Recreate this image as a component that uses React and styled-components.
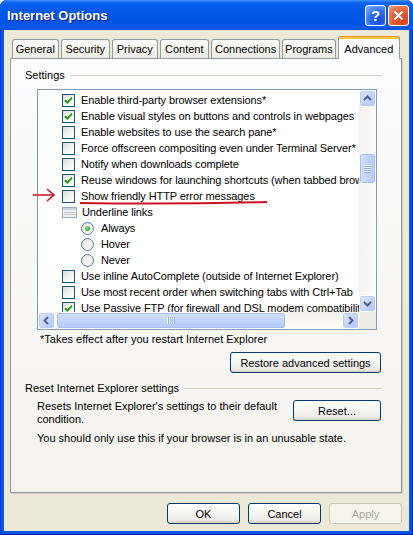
import React from 'react';
import styled, { createGlobalStyle } from 'styled-components';

const GlobalStyle = createGlobalStyle`
  html, body { margin: 0; padding: 0; background: #fff; }
  body {
    font-family: Tahoma, "Liberation Sans", Arial, sans-serif;
    font-size: 11px;
    color: #000;
  }
  * { box-sizing: border-box; }
`;

const Window = styled.div`
  position: relative;
  width: 413px;
  height: 535px;
  display: flex;
  flex-direction: column;
  background: #0855e6;
  border-radius: 7px 7px 0 0;
  box-shadow: inset 1px 0 0 #0831d9, inset -1px 0 0 #001ea0, inset 0 -1px 0 #001ea0;
  overflow: hidden;
`;

const TitleBar = styled.div`
  height: 30px;
  flex: none;
  display: flex;
  align-items: center;
  padding: 0 4px 0 7px;
  background: linear-gradient(180deg, #3d8fff 0px, #0a60ee 3px, #0458e8 12px, #0054e3 24px, #0a5ce8 28px, #0048d8 30px);
`;

const Caption = styled.div`
  flex: 1;
  color: #fff;
  font-family: "Liberation Sans", Arial, sans-serif;
  font-weight: bold;
  font-size: 13px;
  text-shadow: 1px 1px 0 #0a1883;
`;

const CaptionButton = styled.div`
  width: 21px;
  height: 21px;
  margin-left: 2px;
  border: 1px solid #fff;
  border-radius: 3px;
  display: flex;
  align-items: center;
  justify-content: center;
  color: #fff;
  font-family: "Liberation Sans", Arial, sans-serif;
  font-weight: bold;
  font-size: 15px;
  background: ${p => p.$close
    ? 'radial-gradient(circle at 70% 75%, #d7411a 0%, #e25b33 45%, #f0a088 100%)'
    : 'radial-gradient(circle at 70% 75%, #1550d8 0%, #2c6cf0 45%, #8ab6ff 100%)'};
`;

const Body = styled.div`
  flex: 1;
  margin: 0 4px 4px;
  padding: 6px 7px 0 6px;
  display: flex;
  flex-direction: column;
  background: #ece9d8;
`;

const TabStrip = styled.div`
  display: flex;
  align-items: flex-end;
  height: 22px;
  padding-left: 2px;
  position: relative;
  z-index: 1;
`;

const Tab = styled.div`
  width: ${p => p.$w}px;
  height: ${p => (p.$active ? 23 : 19)}px;
  margin-right: 2px;
  margin-bottom: ${p => (p.$active ? -1 : 0)}px;
  display: flex;
  align-items: center;
  justify-content: center;
  border: 1px solid #919b9c;
  border-bottom: none;
  border-radius: 3px 3px 0 0;
  white-space: nowrap;
  background: ${p => (p.$active
    ? '#fcfcfe'
    : 'linear-gradient(180deg, #ffffff 0%, #f7f7f3 40%, #ebeae4 100%)')};
  ${p => p.$active && `
    border-top: 1px solid #e68b2c;
    box-shadow: inset 0 2px 0 #ffc73c;
    padding-top: 1px;
  `}
`;

const Panel = styled.div`
  height: 435px;
  flex: none;
  display: flex;
  flex-direction: column;
  padding: 9px 19px 0 14px;
  border: 1px solid #919b9c;
  box-shadow: 1px 1px 0 #d0cebf;
  background: linear-gradient(180deg, #fcfcfe 0%, #f4f3ee 100%);
`;

const GroupHeader = styled.div`
  display: flex;
  align-items: center;
  gap: 5px;
  height: 14px;
  margin-top: ${p => p.$top || 0}px;
  white-space: nowrap;

  &::after {
    content: '';
    flex: 1;
    height: 1px;
    background: #d0d0bf;
  }
`;

const Listbox = styled.div`
  height: 241px;
  margin: 7px 5px 0 12px;
  display: grid;
  grid-template-columns: 1fr 17px;
  grid-template-rows: 1fr 17px;
  border: 1px solid #7f9db9;
  background: #fff;
`;

const ListContent = styled.div`
  overflow: hidden;
  padding-top: 2px;
  letter-spacing: -0.1px;
`;

const Row = styled.div`
  display: flex;
  align-items: center;
  gap: ${p => p.$gap || 6}px;
  height: 16px;
  padding-left: ${p => p.$indent}px;
  white-space: nowrap;
`;

const Box = styled.div`
  width: 13px;
  height: 13px;
  flex: none;
  display: flex;
  align-items: center;
  justify-content: center;
  border: 1px solid #1c5180;
  background: linear-gradient(135deg, #dcdcd7 0%, #f4f4f0 55%, #ffffff 100%);
`;

const RadioCircle = styled.div`
  width: 13px;
  height: 13px;
  flex: none;
  display: flex;
  align-items: center;
  justify-content: center;
  border: 1px solid #5a7595;
  border-radius: 50%;
  background: linear-gradient(135deg, #dcdcd7 0%, #f4f4f0 55%, #ffffff 100%);
`;

const RadioDot = styled.div`
  width: 5px;
  height: 5px;
  border-radius: 50%;
  background: radial-gradient(circle at 40% 40%, #9ee89e 0%, #3dbb3d 50%, #21a121 100%);
`;

const VScroll = styled.div`
  display: flex;
  flex-direction: column;
  background: linear-gradient(90deg, #f3f1ec 0%, #fdfdfa 100%);
`;

const HScroll = styled.div`
  display: flex;
  background: linear-gradient(180deg, #f3f1ec 0%, #fdfdfa 100%);
`;

const Corner = styled.div`
  background: #eeede5;
`;

const ScrollButton = styled.div`
  width: 17px;
  height: 17px;
  flex: none;
  display: flex;
  align-items: center;
  justify-content: center;
  border: 1px solid #fff;
  border-radius: 3px;
  background: linear-gradient(135deg, #dde8fe 0%, #c4d5fc 50%, #b1c7f8 100%);
  box-shadow: inset 0 0 0 1px #bccdf5;
`;

const Spacer = styled.div`
  flex: 1;
`;

const Thumb = styled.div`
  flex: none;
  display: flex;
  align-items: center;
  justify-content: center;
  border: 1px solid #fff;
  border-radius: 3px;
  box-shadow: inset 0 0 0 1px #a9bff2;
  background: ${p => (p.$horizontal
    ? 'linear-gradient(180deg, #d3e0fd 0%, #c2d4fb 50%, #b5cbf9 100%)'
    : 'linear-gradient(90deg, #d3e0fd 0%, #c2d4fb 50%, #b5cbf9 100%)')};
`;

const Grip = styled.div`
  width: ${p => (p.$horizontal ? 8 : 7)}px;
  height: ${p => (p.$horizontal ? 7 : 8)}px;
  background: ${p => (p.$horizontal
    ? 'repeating-linear-gradient(90deg, #eef4ff 0 1px, #8cb0f8 1px 2px)'
    : 'repeating-linear-gradient(180deg, #eef4ff 0 1px, #8cb0f8 1px 2px)')};
`;

const Note = styled.div`
  margin: 3px 0 0 15px;
  line-height: 13px;
`;

const ButtonLine = styled.div`
  display: flex;
  justify-content: flex-end;
  margin-top: ${p => p.$top || 0}px;
  padding-right: 1px;
`;

const XPButton = styled.button`
  width: ${p => p.$w}px;
  height: 21px;
  flex: none;
  padding: 0;
  font-family: inherit;
  font-size: 11px;
  color: #000;
  border: 1px solid #003c74;
  border-radius: 3px;
  background: linear-gradient(180deg, #ffffff 0%, #f6f6f3 45%, #ecebe6 85%, #d6d0c5 100%);

  &:disabled {
    color: #aca899;
    border-color: #c9c7ba;
    background: #f5f4ea;
  }
`;

const ResetRow = styled.div`
  display: flex;
  justify-content: space-between;
  align-items: flex-start;
  margin-top: 5px;
  padding: 0 1px 0 12px;
`;

const ResetText = styled.div`
  line-height: 13px;
`;

const Warning = styled.div`
  margin: 6px 0 0 12px;
  line-height: 13px;
`;

const DialogButtons = styled.div`
  display: flex;
  justify-content: flex-end;
  gap: 8px;
  margin-top: 10px;
`;

const Annotation = styled.svg`
  position: absolute;
  left: 30px;
  top: 184px;
  pointer-events: none;
`;

const Check = () => (
  <svg width="9" height="9" viewBox="0 0 9 9">
    <path d="M1 4.2 L3.3 6.6 L8 1.8" fill="none" stroke="#21a121" strokeWidth="2" />
  </svg>
);

const Chevron = ({ dir }) => {
  const pts = {
    up: '1,6 4.5,2.5 8,6',
    down: '1,3 4.5,6.5 8,3',
    left: '6,1 2.5,4.5 6,8',
    right: '3,1 6.5,4.5 3,8',
  }[dir];
  return (
    <svg width="9" height="9" viewBox="0 0 9 9">
      <polyline points={pts} fill="none" stroke="#4d6185" strokeWidth="2" />
    </svg>
  );
};

const ListIcon = () => (
  <svg width="15" height="11" viewBox="0 0 15 11" style={{ flex: 'none' }}>
    <rect x="0.5" y="0.5" width="14" height="10" fill="#f2f2f0" stroke="#a0a8b8" />
    <rect x="1" y="1" width="13" height="2" fill="#c8d2e2" />
    <path d="M2 5.5 H13 M2 7.5 H13" stroke="#b8c0d0" />
  </svg>
);

const settings = [
  { type: 'check', on: true, label: 'Enable third-party browser extensions*' },
  { type: 'check', on: true, label: 'Enable visual styles on buttons and controls in webpages' },
  { type: 'check', on: false, label: 'Enable websites to use the search pane*' },
  { type: 'check', on: false, label: 'Force offscreen compositing even under Terminal Server*' },
  { type: 'check', on: false, label: 'Notify when downloads complete' },
  { type: 'check', on: true, label: 'Reuse windows for launching shortcuts (when tabbed browsing is off)' },
  { type: 'check', on: false, label: 'Show friendly HTTP error messages' },
  { type: 'group', label: 'Underline links' },
  { type: 'radio', on: true, label: 'Always' },
  { type: 'radio', on: false, label: 'Hover' },
  { type: 'radio', on: false, label: 'Never' },
  { type: 'check', on: false, label: 'Use inline AutoComplete (outside of Internet Explorer)' },
  { type: 'check', on: false, label: 'Use most recent order when switching tabs with Ctrl+Tab' },
  { type: 'check', on: true, label: 'Use Passive FTP (for firewall and DSL modem compatibility)' },
];

const tabs = [
  { name: 'General', w: 47 },
  { name: 'Security', w: 50 },
  { name: 'Privacy', w: 46 },
  { name: 'Content', w: 50 },
  { name: 'Connections', w: 70 },
  { name: 'Programs', w: 54 },
  { name: 'Advanced', w: 63, active: true },
];

const SettingRow = ({ item }) => {
  if (item.type === 'radio') {
    return (
      <Row $indent={43} $gap={7}>
        <RadioCircle>{item.on && <RadioDot />}</RadioCircle>
        <span>{item.label}</span>
      </Row>
    );
  }
  if (item.type === 'group') {
    return (
      <Row $indent={24} $gap={5}>
        <ListIcon />
        <span>{item.label}</span>
      </Row>
    );
  }
  return (
    <Row $indent={24}>
      <Box>{item.on && <Check />}</Box>
      <span>{item.label}</span>
    </Row>
  );
};

const App = () => {
  return (
    <>
      <GlobalStyle />
      <Window>
        <TitleBar>
          <Caption>Internet Options</Caption>
          <CaptionButton>?</CaptionButton>
          <CaptionButton $close>
            <svg width="11" height="11" viewBox="0 0 11 11">
              <path d="M1.5 1.5 L9.5 9.5 M9.5 1.5 L1.5 9.5" stroke="#fff" strokeWidth="2.2" />
            </svg>
          </CaptionButton>
        </TitleBar>

        <Body>
          <TabStrip>
            {tabs.map(t => (
              <Tab key={t.name} $w={t.w} $active={t.active}>{t.name}</Tab>
            ))}
          </TabStrip>

          <Panel>
            <GroupHeader>Settings</GroupHeader>
            <Listbox>
              <ListContent>
                {settings.map((item, i) => <SettingRow key={i} item={item} />)}
              </ListContent>
              <VScroll>
                <ScrollButton><Chevron dir="up" /></ScrollButton>
                <Thumb style={{ height: 31, marginTop: 46 }}><Grip /></Thumb>
                <Spacer />
                <ScrollButton><Chevron dir="down" /></ScrollButton>
              </VScroll>
              <HScroll>
                <ScrollButton><Chevron dir="left" /></ScrollButton>
                <Thumb $horizontal style={{ width: 230, marginLeft: 1 }}><Grip $horizontal /></Thumb>
                <Spacer />
                <ScrollButton><Chevron dir="right" /></ScrollButton>
              </HScroll>
              <Corner />
            </Listbox>
            <Note>*Takes effect after you restart Internet Explorer</Note>
            <ButtonLine $top={6}>
              <XPButton $w={151}>Restore advanced settings</XPButton>
            </ButtonLine>

            <GroupHeader $top={8}>Reset Internet Explorer settings</GroupHeader>
            <ResetRow>
              <ResetText>
                Resets Internet Explorer's settings to their default<br />
                condition.
              </ResetText>
              <XPButton $w={88}>Reset...</XPButton>
            </ResetRow>
            <Warning>You should only use this if your browser is in an unusable state.</Warning>
          </Panel>

          <DialogButtons>
            <XPButton $w={73}>OK</XPButton>
            <XPButton $w={73}>Cancel</XPButton>
            <XPButton $w={73} disabled>Apply</XPButton>
          </DialogButtons>
        </Body>

        <Annotation width="240" height="24" viewBox="0 0 240 24">
          <path d="M3 11 H24" stroke="#cc1122" strokeWidth="1.6" fill="none" />
          <path d="M17 5 L24 11 L17 17" stroke="#cc1122" strokeWidth="1.6" fill="none" />
          <path d="M50 19 Q140 20.5 237 18" stroke="#cc1122" strokeWidth="2" fill="none" />
        </Annotation>
      </Window>
    </>
  );
};

export default App;
